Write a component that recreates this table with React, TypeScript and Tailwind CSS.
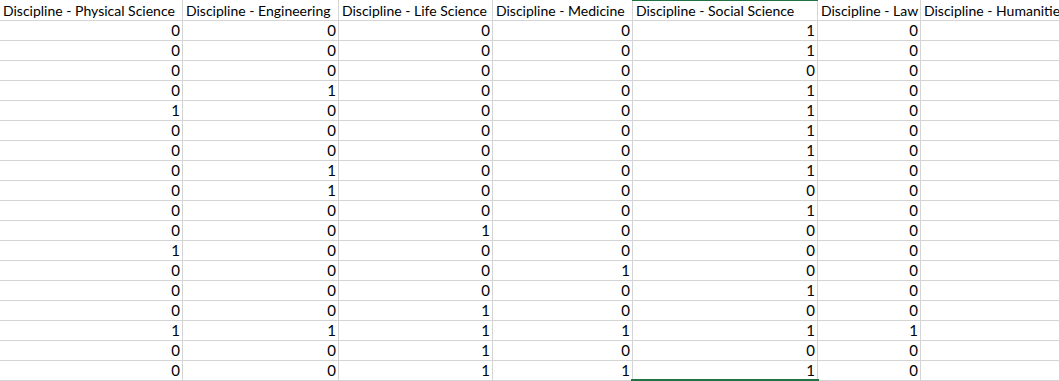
const HEADERS = [
  'Discipline - Physical Science',
  'Discipline - Engineering',
  'Discipline - Life Science',
  'Discipline - Medicine',
  'Discipline - Social Science',
  'Discipline - Law',
  'Discipline - Humanities',
];

// physical, engineering, life, medicine, social, law
const ROWS: number[][] = [
  [0, 0, 0, 0, 1, 0],
  [0, 0, 0, 0, 1, 0],
  [0, 0, 0, 0, 0, 0],
  [0, 1, 0, 0, 1, 0],
  [1, 0, 0, 0, 1, 0],
  [0, 0, 0, 0, 1, 0],
  [0, 0, 0, 0, 1, 0],
  [0, 1, 0, 0, 1, 0],
  [0, 1, 0, 0, 0, 0],
  [0, 0, 0, 0, 1, 0],
  [0, 0, 1, 0, 0, 0],
  [1, 0, 0, 0, 0, 0],
  [0, 0, 0, 1, 0, 0],
  [0, 0, 0, 0, 1, 0],
  [0, 0, 1, 0, 0, 0],
  [1, 1, 1, 1, 1, 1],
  [0, 0, 1, 0, 0, 0],
  [0, 0, 1, 1, 1, 0],
];

const cols = 'grid grid-cols-[183px_156px_154px_140px_185px_103px_1fr]';
const cell = 'border-r border-b border-[#d4d4d4] whitespace-nowrap overflow-hidden';

export default function App() {
  return (
    <div className="relative w-[1060px] h-[381px] overflow-hidden bg-white text-black text-[14px] leading-none font-['Lato','Noto_Sans',sans-serif]">
      <div className={`${cols} h-[21px]`}>
        {HEADERS.map((h) => (
          <div key={h} className={`${cell} flex items-end pl-[3px] pb-[2px]`}>{h}</div>
        ))}
      </div>
      {ROWS.map((r, i) => (
        <div key={i} className={`${cols} h-[20px]`}>
          {r.map((v, j) => (
            <div key={j} className={`${cell} flex items-end justify-end pr-[2px] pb-[2px] text-[15px]`}>{v}</div>
          ))}
          <div className={cell} />
        </div>
      ))}

      {/* selection markers */}
      <div className="absolute left-[632px] top-0 w-[186px] h-px bg-[#217346]" />
      <div className="absolute left-[631px] top-[379px] w-[188px] h-[2px] bg-[#217346]" />
    </div>
  );
}
